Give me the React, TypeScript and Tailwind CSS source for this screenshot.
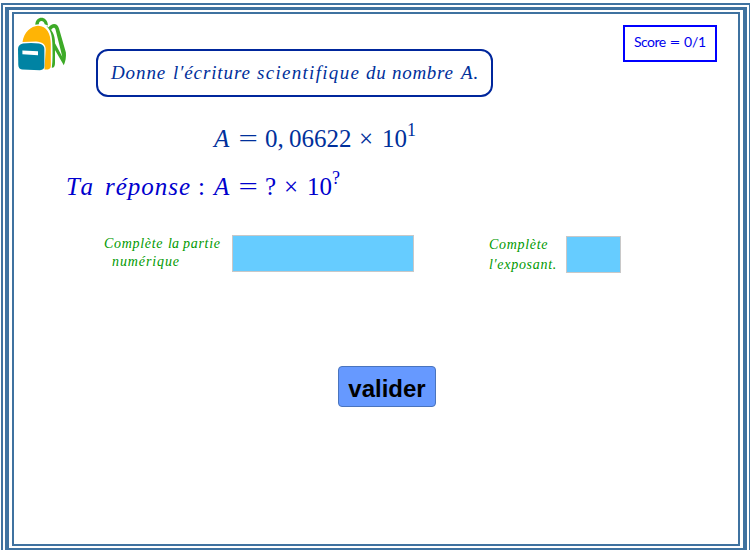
function Backpack() {
  return (
    <svg className="ml-[3px] mt-[2px] h-[56px] w-[50px] shrink-0" viewBox="17 16 50 56" fill="none">
      <path d="M35.3 24.8C35.5 15.5 47.5 15.2 48 25.5L44.7 24.2C43.5 19.8 39 20.2 38.8 24.2Z" fill="#3daa27" />
      <path d="M46 25.6C52 29 55 35 55 43V63C55 66 54 68 51.8 67.8C52.8 60 52.6 52 52.3 43C52 35 50.5 30 46 25.6Z" fill="#3daa27" />
      <path fillRule="evenodd" d="M48.5 27.5C51.5 23 57.3 22.4 59 28.5L65.9 52.5C66.3 57 65.5 61.5 63.8 65.2L53.8 48V41L62.3 56.8L55.5 29.6C54.8 26.6 52.3 27.2 51 30.3Z" fill="#3daa27" />
      <path d="M22.5 42C24 32 31 26 38 25.7C47 26 50.8 34 50.8 44V66C50.8 69 48 70 44.5 69.5L45.7 49C45.5 44 42 42 36 41.5Z" fill="#ffb405" />
      <path d="M23 43.5Q31 42.4 39 43.5Q44.4 44.5 44.4 49V66Q44.4 70 40 70.2L22 69.6Q18.5 69 18.3 65L18 49Q18 44.5 23 43.5Z" fill="#0083a3" />
      <path d="M22.4 50.5L38 51.2V55.2L22.4 54.3Z" fill="white" />
    </svg>
  );
}

function Field({ label, className }: { label: string; className: string }) {
  return <input aria-label={label} className={`block border border-[#c8c8c8] bg-[#66ccff] outline-none ${className}`} />;
}

export default function App() {
  return (
    <div className="h-[550px] w-[750px] overflow-hidden bg-white pl-px pt-[3px]">
      <div className="h-[560px] w-[750px] border-2 border-[#3f72a0] pl-[2px] pr-[2px] pt-[2px]">
        <div className="h-[545px] w-[742px] border-4 border-t-[3px] border-[#3f72a0] pl-[3px] pt-[2px]">
          <div className="h-[534px] w-[728px] border-2 border-[#3f72a0] font-['Liberation_Serif',serif]">
            <header className="flex h-[83px] items-start">
              <Backpack />
              <h1 className="ml-[29px] mt-[35px] flex h-[48px] w-[397px] items-center whitespace-nowrap rounded-[12px] border-2 border-[#00269c] pl-[13px] text-[19px] font-normal italic leading-[44px] text-[#00309b]">
                <span className="w-[62px] tracking-[0.9px]">Donne</span>
                <span className="w-[84px] tracking-[0.9px]">l′écriture</span>
                <span className="w-[109px] tracking-[1.3px]">scientifique</span>
                <span className="w-[26px] tracking-[0.8px]">du</span>
                <span className="w-[69px] tracking-[0.7px]">nombre</span>
                <span className="tracking-[1px]">A.</span>
              </h1>
              <div className="ml-[130px] mt-[11px] flex h-[37px] w-[94px] items-center whitespace-nowrap border-2 border-[#0000ff] pb-[3px] pl-[9px] font-['Lato',sans-serif] text-[14px] leading-[30px] text-[#0000ee]">
                <span className="w-[37px] tracking-[-0.5px]">Score</span>
                <span className="w-[8px] scale-x-[1.35]">=</span>
                <span className="ml-[5px] tracking-[-0.2px]">0/1</span>
              </div>
            </header>
            <main>
              <div className="mt-[18px] flex h-[48px] whitespace-nowrap pl-[200px] text-[25px] leading-[48px] text-[#00309b]">
                <span className="w-[27px] italic">A</span>
                <span className="w-[14px] scale-x-[1.37]">=</span>
                <span className="ml-[10px] w-[24px]">0,</span>
                <span className="w-[70px]">06622</span>
                <span className="w-[23px]">×</span>
                <span>10</span>
                <span className="relative -top-[9px] text-[18px]">1</span>
              </div>
              <div className="flex h-[48px] whitespace-nowrap pl-[52px] text-[25px] leading-[48px] text-[#0000cd]">
                <span className="w-[39px] italic tracking-[3px]">Ta</span>
                <span className="w-[93px] italic tracking-[1px]">réponse</span>
                <span className="w-[16px]">:</span>
                <span className="w-[27px] italic">A</span>
                <span className="w-[14px] scale-x-[1.37]">=</span>
                <span className="ml-[10px] w-[19px]">?</span>
                <span className="w-[23px]">×</span>
                <span>10</span>
                <span className="relative -top-[9px] text-[18px]">?</span>
              </div>
              <div className="mt-[24px] flex h-[40px] items-start text-[14px] italic text-[#009900]">
                <div className="ml-[90px] w-[128px] whitespace-nowrap leading-[18px]">
                  <p className="flex">
                    <span className="w-[64px] tracking-[0.7px]">Complète</span>
                    <span className="w-[15px]">la</span>
                    <span className="tracking-[0.7px]">partie</span>
                  </p>
                  <p className="pl-[8px] tracking-[0.9px]">numérique</p>
                </div>
                <Field label="Partie numérique" className="h-[37px] w-[182px]" />
                <div className="ml-[75px] w-[77px] whitespace-nowrap leading-[20px]">
                  <p className="tracking-[0.7px]">Complète</p>
                  <p className="tracking-[0.7px]">l′exposant.</p>
                </div>
                <Field label="Exposant" className="mt-px h-[37px] w-[55px]" />
              </div>
              <button className="ml-[324px] mt-[91px] flex h-[41px] w-[98px] items-center justify-center rounded-[4px] border border-[#4a74bd] bg-[#6699ff] pt-[5px] font-['Liberation_Sans',sans-serif] text-[24px] font-bold leading-none text-black">
                valider
              </button>
            </main>
          </div>
        </div>
      </div>
    </div>
  );
}
